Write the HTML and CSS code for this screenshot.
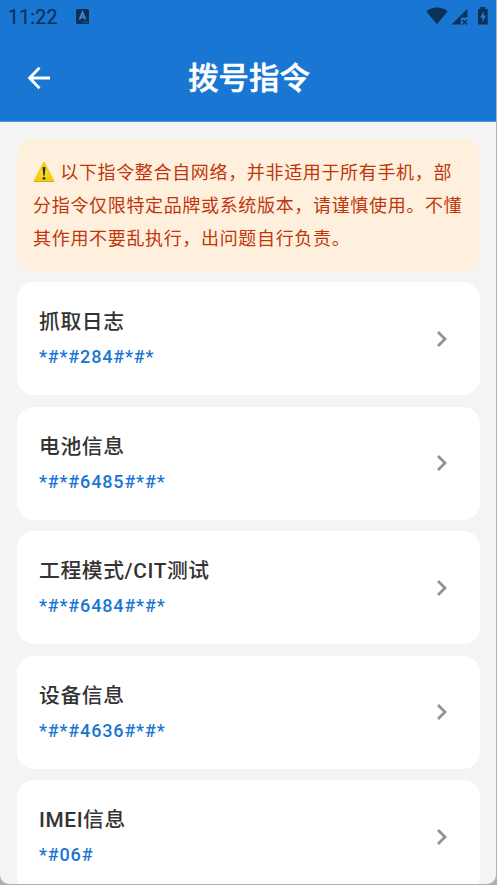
FILE: index.html
```
<!DOCTYPE html>
<html lang="zh-CN">
<head>
<meta charset="utf-8">
<title>拨号指令</title>
<link rel="stylesheet" href="styles.css">
</head>
<body>
<div class="screen">
  <header class="top">
    <div class="status">
      <span class="clock">11:22</span>
      <svg class="ime" width="13" height="15" viewBox="0 0 13 15"><rect width="13" height="15" rx="1.5" fill="#0a3158"/><path d="M3.5 10.5 6.5 3.5 9.5 10.5M4.6 8.4H8.4" fill="none" stroke="#3f87d2" stroke-width="1.9"/><path d="M7 13h5" stroke="#2a6299" stroke-width="1"/></svg>
      <svg class="system" width="63" height="20" viewBox="0 0 63 20">
        <g fill="#0a3158">
          <path d="M.3 5.3C6.2.1 15.8.1 21.700 5.300L11 18.300Z"/>
          <path d="M41.300 3v8.500h-6.500V18.500H25.500Z"/>
          <path d="M52 3h2.300V1h5V3H61.700V18.500H52Z"/>
        </g>
        <path d="M36.500 14l4.500 4.500m0-4.500-4.500 4.500" stroke="#0a3158" stroke-width="1.200"/>
        <path d="M57.700 5 54 11.500h2.300V16.500L60 9.500H57.700Z" fill="#2a78c5"/>
      </svg>
    </div>
    <div class="bar">
      <svg class="back" width="24" height="24" viewBox="0 0 24 24" fill="none" stroke="#fff" stroke-width="2.900"><path d="M23 12H3M12.500 1.800 2.600 12 12.500 22.200"/></svg>
      <h1>拨号指令</h1>
    </div>
  </header>
  <main>
    <p class="notice"><svg class="warn" width="22" height="22" viewBox="0 0 22 22"><defs><linearGradient id="y" x2="0" y2="1"><stop stop-color="#ffef42"/><stop offset="1" stop-color="#f2c900"/></linearGradient></defs><path d="M11 1.800 20.400 20H1.600Z" fill="url(#y)" stroke="#f4d10f" stroke-width="2" stroke-linejoin="round"/><path d="M1 20.500h20" stroke="#c9aa32"/><path d="M9.500 6.500q1.500-1.500 3 0L11.700 14.500h-1.400Z" fill="#24343c"/><circle cx="11" cy="17.300" r="1.400" fill="#24343c"/></svg> 以下指令整合自网络，并非适用于所有手机，部分指令仅限特定品牌或系统版本，请谨慎使用。不懂其作用不要乱执行，出问题自行负责。</p>
    <section class="card"><div><h2>抓取日志</h2><p class="code">*#*#284#*#*</p></div><svg class="chev" width="12" height="18" viewBox="0 0 12 18"><path d="M2 2l7 7-7 7"/></svg></section>
    <section class="card"><div><h2>电池信息</h2><p class="code">*#*#6485#*#*</p></div><svg class="chev" width="12" height="18" viewBox="0 0 12 18"><path d="M2 2l7 7-7 7"/></svg></section>
    <section class="card"><div><h2>工程模式/CIT测试</h2><p class="code">*#*#6484#*#*</p></div><svg class="chev" width="12" height="18" viewBox="0 0 12 18"><path d="M2 2l7 7-7 7"/></svg></section>
    <section class="card"><div><h2>设备信息</h2><p class="code">*#*#4636#*#*</p></div><svg class="chev" width="12" height="18" viewBox="0 0 12 18"><path d="M2 2l7 7-7 7"/></svg></section>
    <section class="card"><div><h2>IMEI信息</h2><p class="code">*#06#</p></div><svg class="chev" width="12" height="18" viewBox="0 0 12 18"><path d="M2 2l7 7-7 7"/></svg></section>
  </main>
</div>
</body>
</html>
```
FILE: styles.css
```
* { box-sizing: border-box; margin: 0; padding: 0; }
html { background: #b0b0b0; }
body {
  height: 885px;
  overflow: hidden;
  font-family: Roboto, "Noto Sans CJK SC", sans-serif;
}
.screen {
  width: 496px;
  height: 884px;
  overflow: hidden;
  background: #f4f4f4;
  border-radius: 0 0 9px 9px;
}
.top {
  height: 122px;
  background: #1976d2;
  border-bottom: 1px solid #4a92db;
}
.status {
  display: flex;
  height: 34px;
  padding: 7px 7px 0 8px;
  color: #0a3158;
}
.clock {
  width: 68px;
  font-size: 19.500px;
  font-weight: 400;
  -webkit-text-stroke: 0.2px #0a3158;
  line-height: 22px;
  letter-spacing: 0.200px;
}
.ime { margin-top: 2px; }
.system { margin: -1px 0 0 auto; }
.bar {
  display: grid;
  grid-template-columns: 60px 1fr 60px;
  align-items: center;
  height: 87px;
  padding-left: 2px;
}
.back { margin-left: 25px; }
h1 {
  padding-top: 2px;
  text-align: center;
  color: #fff;
  font-size: 30.4px;
  font-weight: 500;
  -webkit-text-stroke: 0.5px #fff;
  line-height: 40px;
}
main { padding: 16.600px 16px 0 16.500px; }
.notice {
  height: 132.400px;
  margin-bottom: 11.200px;
  padding: 17.200px 16px 0 16.600px;
  border-radius: 17px;
  background: #fff0de;
  color: #bf360c;
  font-size: 18px;
  line-height: 33.200px;
  letter-spacing: 0.660px;
}
.warn { vertical-align: -4px; }
.card {
  display: flex;
  align-items: center;
  justify-content: space-between;
  height: 113.300px;
  margin-bottom: 11.200px;
  padding: 0 32.500px 0 22.500px;
  border-radius: 17px;
  background: #fff;
}
h2 {
  color: #333;
  font-size: 20.800px;
  font-weight: 500;
  line-height: 30px;
  letter-spacing: 0.600px;
}
.code {
  margin-top: 7px;
  color: #1976d2;
  font-size: 18px;
  font-weight: 500;
  line-height: 26px;
  letter-spacing: 0.850px;
}
.chev { fill: none; stroke: #929292; stroke-width: 2.800; }
```
